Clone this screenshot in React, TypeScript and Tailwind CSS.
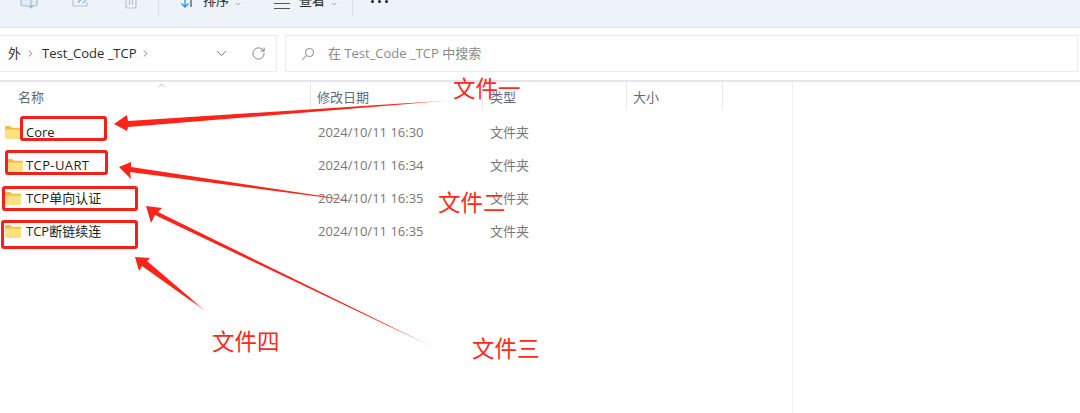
import { ChevronDown, ChevronRight, ChevronUp, RotateCw } from "lucide-react";

const uiFont = "font-['Open_Sans','Noto_Sans_CJK_SC',sans-serif]";
const labelClass =
  "absolute text-[22.5px] leading-none text-[#ff2a1c] font-['Noto_Sans_CJK_SC',sans-serif] whitespace-nowrap";

const rows = [
  { name: "Core", date: "2024/10/11 16:30", iconClass: "ml-[5px]", textClass: "ml-[5px]" },
  { name: "TCP-UART", date: "2024/10/11 16:34", iconClass: "ml-[7px]", textClass: "ml-[3px] tracking-[0.4px]" },
  { name: "TCP单向认证", date: "2024/10/11 16:35", iconClass: "ml-[5px]", textClass: "ml-[5px]" },
  { name: "TCP断链续连", date: "2024/10/11 16:35", iconClass: "ml-[5px]", textClass: "ml-[5px]" },
];

const boxes = [
  "left-[20px] top-[116px] w-[87px] h-[25px]",
  "left-[5px] top-[150px] w-[103px] h-[25px]",
  "left-[2px] top-[186px] w-[136px] h-[25px]",
  "left-[1px] top-[220px] w-[137px] h-[29px]",
];

function FolderIcon() {
  return (
    <svg width="16" height="13" viewBox="0 0 16 13" className="shrink-0">
      <path d="M0 1.2C0 .5.5 0 1.2 0h4l1.6 1.8h8C15.5 1.8 16 2.300 16 3v2H0z" fill="#f2bd3c" />
      <path d="M0 3.400h16v8.400c0 .7-.5 1.200-1.200 1.200H1.200C.5 13 0 12.500 0 11.800z" fill="#ffe083" />
    </svg>
  );
}

function Arrow({ id, tip, wing1, neck1, tail, neck2, wing2, fade }: {
  id: string;
  tip: number[];
  wing1: number[];
  neck1: number[];
  tail: number[];
  neck2: number[];
  wing2: number[];
  fade: number;
}) {
  const pts = [tip, wing1, neck1, tail, neck2, wing2].map((p) => p.join(",")).join(" ");
  return (
    <>
      <linearGradient id={id} gradientUnits="userSpaceOnUse" x1={tip[0]} y1={tip[1]} x2={tail[0]} y2={tail[1]}>
        <stop offset="0" stopColor="#ff2318" />
        <stop offset={fade} stopColor="#ff2318" />
        <stop offset="1" stopColor="#ff2318" stopOpacity="0.1" />
      </linearGradient>
      <polygon points={pts} fill={`url(#${id})`} />
    </>
  );
}

export default function App() {
  return (
    <div className={`relative w-[1080px] h-[413px] overflow-hidden bg-white ${uiFont}`}>
      {/* toolbar, cut off at the top of the shot */}
      <div className="h-[28px] bg-[#eef3f9] border-b border-[#dfe3e8] flex items-start overflow-hidden">
        <svg width="18" height="12" viewBox="0 0 18 12" className="ml-[20px] mt-0" fill="none" stroke="#a9bccd" strokeWidth="1.2">
          <rect x="1" y="-6" width="16" height="12" rx="1.500" fill="#e4ebf2" />
          <path d="M11 0v8M9 6l2 2 2-2" stroke="#8fc1e8" />
        </svg>
        <svg width="18" height="12" viewBox="0 0 18 12" className="ml-[34px]" fill="none" stroke="#b4c2cf" strokeWidth="1.2">
          <path d="M1-4v10h14V2" />
          <path d="M6 3c1-3 4-4 7-4M11 3l3-3" stroke="#8fc1e8" strokeWidth="1.500" />
        </svg>
        <svg width="14" height="9" viewBox="0 0 14 9" className="ml-[34px]" fill="none" stroke="#b9c3cd" strokeWidth="1.2">
          <path d="M2-2v8c0 1 .8 2 2 2h6c1.200 0 2-1 2-2v-8M5.500 0v5M8.500 0v5" />
        </svg>
        <div className="ml-[20px] w-px h-[16px] bg-[#d9dee4]" />
        <svg width="16" height="9" viewBox="0 0 16 9" className="ml-[21px]" fill="none" strokeWidth="1.300">
          <path d="M5-4v11M1.500 3.500 5 7l3.500-3.500" stroke="#2f8fd8" />
          <path d="M11 7V-3" stroke="#555" />
        </svg>
        <span className="ml-[7px] -mt-[9px] text-[13px] leading-[18px] text-[#2b2b2b]">排序</span>
        <ChevronDown size={8} strokeWidth={2} className="ml-[5px] mt-0 text-[#888]" />
        <div className="ml-[32px] mt-[3px] w-[16px] h-[6px] border-y border-[#555]" />
        <span className="ml-[9px] -mt-[9px] text-[13px] leading-[18px] text-[#2b2b2b]">查看</span>
        <ChevronDown size={8} strokeWidth={2} className="ml-[5px] mt-0 text-[#888]" />
        <div className="ml-[14px] w-px h-[16px] bg-[#d9dee4]" />
        <div className="ml-[18px] flex gap-[4px]">
          <div className="w-[3px] h-[3px] rounded-full bg-[#222]" />
          <div className="w-[3px] h-[3px] rounded-full bg-[#222]" />
          <div className="w-[3px] h-[3px] rounded-full bg-[#222]" />
        </div>
      </div>

      {/* address + search */}
      <div className="h-[54px] border-b-2 border-[#e4e6e9] flex items-center pb-[1px]">
        <div className="w-[277px] h-[37px] border border-l-0 border-[#e9ebee] flex items-center text-[13px] text-[#2b2b2b] shrink-0">
          <span className="ml-[8px]">外</span>
          <ChevronRight size={11} strokeWidth={1.800} className="ml-[4px] text-[#666]" />
          <span className="ml-[6px] w-[95px] whitespace-nowrap text-[13px]">Test_Code _TCP</span>
          <ChevronRight size={11} strokeWidth={1.800} className="ml-[3px] text-[#666]" />
          <ChevronDown size={17} strokeWidth={1.300} className="ml-[62px] text-[#666]" />
          <RotateCw size={15} strokeWidth={1.300} className="ml-[21px] text-[#666]" />
        </div>
        <div className="ml-[8px] w-[793px] h-[37px] border border-[#e9ebee] flex items-center text-[13px] text-[#8a8a8a]">
          <svg width="14" height="14" viewBox="0 0 14 14" className="ml-[15px]" fill="none" strokeWidth="1.200">
            <circle cx="8.500" cy="5.500" r="4" stroke="#9a9a9a" />
            <path d="M5.500 8.500 1 13" stroke="#c9a98a" />
          </svg>
          <span className="ml-[13px] whitespace-nowrap">在 Test_Code _TCP 中搜索</span>
        </div>
      </div>

      {/* list */}
      <div className="relative w-[793px] h-[331px] border-r border-[#f1f1f1]">
        <div className="h-[28px] flex text-[13px] leading-[30px] text-[#5f6b7a]">
          <div className="relative w-[311px] pl-[18px] border-r border-[#e8e8e8]">
            名称
            <ChevronUp size={11} strokeWidth={1.300} className="absolute left-[156px] -top-[2px] text-[#888]" />
          </div>
          <div className="w-[172px] pl-[6px] border-r border-[#e8e8e8]">修改日期</div>
          <div className="w-[144px] pl-[7px] border-r border-[#e8e8e8]">类型</div>
          <div className="w-[96px] pl-[6px] border-r border-[#e8e8e8]">大小</div>
        </div>
        <div className="pt-[6px]">
          {rows.map((row) => (
            <div key={row.name} className="h-[33px] flex items-center text-[13px]">
              <div className="w-[311px] flex items-center">
                <div className={row.iconClass}>
                  <FolderIcon />
                </div>
                <span className={`text-[#222] whitespace-nowrap ${row.textClass}`}>{row.name}</span>
              </div>
              <div className="w-[172px] pl-[7px] text-[#777] whitespace-nowrap">{row.date}</div>
              <div className="pl-[7px] text-[#777]">文件夹</div>
            </div>
          ))}
        </div>
      </div>

      {/* hand drawn annotations on top of the shot */}
      {boxes.map((box) => (
        <div key={box} className={`absolute ${box} border-[3px] border-[#f5201a] rounded-[3px]`} />
      ))}

      <svg width="1080" height="413" className="absolute left-0 top-0 pointer-events-none">
        <Arrow id="a1" tip={[114, 124]} wing1={[127, 115]} neck1={[128, 121]} tail={[456, 100]} neck2={[128, 127]} wing2={[127, 131]} fade={0.85} />
        <Arrow id="a2" tip={[119, 167]} wing1={[131, 162]} neck1={[131, 167]} tail={[368, 203]} neck2={[130, 172]} wing2={[131, 179]} fade={0.85} />
        <Arrow id="a3" tip={[146, 206]} wing1={[162, 208]} neck1={[158, 212]} tail={[441, 351]} neck2={[155, 215]} wing2={[151, 223]} fade={0.82} />
        <Arrow id="a4" tip={[135, 257]} wing1={[150, 258]} neck1={[147, 261]} tail={[208, 313]} neck2={[142, 266]} wing2={[139, 271]} fade={0.75} />
      </svg>

      <span className={`${labelClass} left-[453px] top-[76px]`}>文件一</span>
      <span className={`${labelClass} left-[438px] top-[190px]`}>文件二</span>
      <span className={`${labelClass} left-[212px] top-[329px]`}>文件四</span>
      <span className={`${labelClass} left-[472px] top-[336px]`}>文件三</span>
    </div>
  );
}
